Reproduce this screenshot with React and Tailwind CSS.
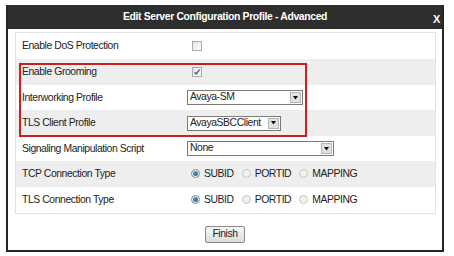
const rows = [
  { label: "Enable DoS Protection", kind: "check", checked: false },
  { label: "Enable Grooming", kind: "check", checked: true },
  { label: "Interworking Profile", kind: "select", value: "Avaya-SM", w: "w-[116px]" },
  { label: "TLS Client Profile", kind: "select", value: "AvayaSBCClient", w: "w-[94px]" },
  { label: "Signaling Manipulation Script", kind: "select", value: "None", w: "w-[147px]" },
  { label: "TCP Connection Type", kind: "radio" },
  { label: "TLS Connection Type", kind: "radio" },
];

function Checkbox({ checked }) {
  return (
    <span className="flex h-[10px] w-[10px] items-center justify-center border border-[#a9a9a9] bg-gradient-to-br from-[#e6e6e6] to-[#fbfbfb]">
      {checked && (
        <svg width="8" height="8" viewBox="0 0 8 8">
          <path d="M1.5 4.2 L3.2 6 L6.6 1.6" fill="none" stroke="#3c5a9a" strokeWidth="1.3" />
        </svg>
      )}
    </span>
  );
}

function Select({ value, w }) {
  return (
    <div className={`flex h-[15px] items-center border border-[#7a7a7a] bg-white ${w}`}>
      <span className="flex-1 pl-[2px] leading-none">{value}</span>
      <span className="mr-[1px] flex h-[11px] w-[11px] items-center justify-center border border-[#b5b5b5] bg-[#e2e2e2]">
        <svg width="5" height="4" viewBox="0 0 5 4">
          <path d="M0 0 H5 L2.5 3.5 Z" fill="#000" />
        </svg>
      </span>
    </div>
  );
}

function Radio({ on, label }) {
  return (
    <span className="flex items-center gap-[4px]">
      <span
        className={`flex h-[9px] w-[9px] items-center justify-center rounded-full border ${
          on ? "border-[#7d8c99] bg-[#eef2f5]" : "border-[#c6c6c6] bg-[#f1f1f1]"
        }`}
      >
        {on && <span className="h-[5px] w-[5px] rounded-full bg-gradient-to-br from-[#5aa6d6] to-[#1a5f95]" />}
      </span>
      <span>{label}</span>
    </span>
  );
}

export default function App() {
  return (
    <div className="h-[256px] w-[454px] bg-white pl-[6px] pt-[5px] font-['Liberation_Sans',Arial,sans-serif] text-[10.4px] tracking-[-0.42px] text-[#222]">
      <div className="flex h-[247px] w-[438px] flex-col border-x-2 border-b-2 border-[#262626]">
        <div className="relative flex h-[24px] items-center justify-center bg-[#2e2e2e] text-[10.4px] font-bold tracking-[-0.35px] text-white">
          Edit Server Configuration Profile - Advanced
          <span className="absolute right-[2px] top-[6px] text-[11px] font-bold">X</span>
        </div>

        <div className="px-[7px] pr-[6px] pt-[3px]">
          <div className="relative border border-[#e3e3e3]">
            {rows.map((r, i) => (
              <div
                key={r.label}
                className={`flex items-center ${i % 2 ? "bg-[#eeeeee]" : "bg-white"} ${
                  i === 2 || i === 4 ? "h-[25px]" : "h-[26px]"
                }`}
              >
                <div className="w-[171px] pl-[6px]">{r.label}</div>
                {r.kind === "check" && (
                  <div className="pl-[5px]">
                    <Checkbox checked={r.checked} />
                  </div>
                )}
                {r.kind === "select" && <Select value={r.value} w={r.w} />}
                {r.kind === "radio" && (
                  <div className="flex items-center gap-[8px] pl-[4px]">
                    <Radio on label="SUBID" />
                    <Radio label="PORTID" />
                    <Radio label="MAPPING" />
                  </div>
                )}
              </div>
            ))}
            <div className="pointer-events-none absolute left-[3px] top-[30px] h-[74px] w-[288px] border-2 border-[#cc1f1f]" />
          </div>
        </div>

        <div className="flex justify-center pt-[12px]">
          <button className="h-[17px] rounded-[2px] border border-[#8a8a8a] bg-gradient-to-b from-[#f6f6f6] to-[#dcdcdc] px-[6px] text-[10.4px] leading-none text-[#222]">
            Finish
          </button>
        </div>
      </div>
    </div>
  );
}
